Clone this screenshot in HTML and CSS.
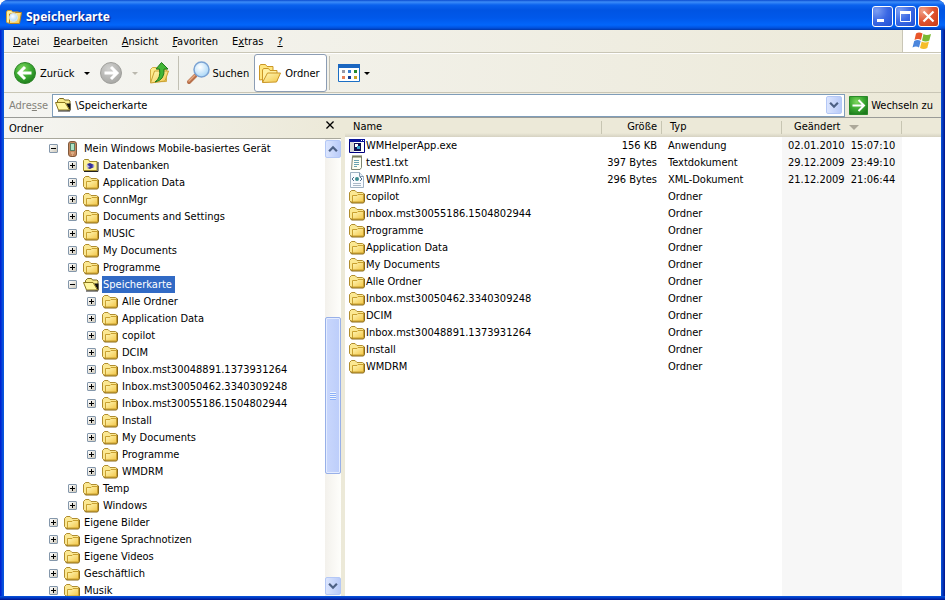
FILE: index.html
```
<!DOCTYPE html>
<html lang="de">
<head>
  <meta charset="UTF-8">
  <meta name="viewport" content="width=device-width, initial-scale=1.0">
  <title>Speicherkarte</title>
  <link rel="stylesheet" href="styles.css">
</head>
<body>
  <!-- Shared icons -->
  <svg class="sprite" width="0" height="0" aria-hidden="true">
    <defs>
      <linearGradient id="gold" x1="0" y1="0" x2="1" y2="1">
        <stop offset="0" stop-color="#fff8b8"/><stop offset="1" stop-color="#f3c648"/>
      </linearGradient>
      <radialGradient id="green" cx=".4" cy=".3" r=".75">
        <stop offset="0" stop-color="#7fd75e"/><stop offset=".55" stop-color="#3aa831"/><stop offset="1" stop-color="#1d7a1b"/>
      </radialGradient>
      <radialGradient id="grey" cx=".4" cy=".3" r=".75">
        <stop offset="0" stop-color="#d2d2d0"/><stop offset="1" stop-color="#a5a5a2"/>
      </radialGradient>
      <radialGradient id="lens" cx=".4" cy=".35" r=".7">
        <stop offset="0" stop-color="#fff"/><stop offset="1" stop-color="#a5d5f7"/>
      </radialGradient>
      <symbol id="folder" viewBox="0 0 16 16">
        <path d="M1.500 12.500l1 1.500h12l1-1.500V5l-1.500-1" fill="#8a6a1c" stroke="#8a6a1c"/>
        <path d="M.5 11.500V3.500L2.500 1.500h3.500L8 3.500h5.500l1 1v8.500H2z" fill="#fbe892" stroke="#b08d2e"/>
        <path d="M3.500 13V6.500h4.500l1-1h5.500V13z" fill="url(#gold)" stroke="#c9a030"/>
      </symbol>
      <symbol id="folder-open" viewBox="0 0 16 16">
        <path d="M2.500 10V3.500L4.500 1.500h4l1 1.500h4.500l1 1v9h-2z" fill="#f6e98a" stroke="#7b6a20"/>
        <path d="M11 6.500h4.500V14z" fill="#111"/>
        <path d="M.5 5.500H10l4.500 7.500h-11z" fill="#fff7a0" stroke="#8c781e"/>
        <path d="M3 14h12" stroke="#222"/>
      </symbol>
      <symbol id="database" viewBox="0 0 16 16">
        <path d="M.5 12.500v-10l1-1h4l1 2h7.500v9z" fill="#fdf29a" stroke="#a08b28"/>
        <path d="M15 4v9.500H1" fill="none" stroke="#222"/>
        <path d="M3 8q4-5 9 0-5 4-9 0" fill="#b9b6e8"/>
        <path d="M4 6l3-1 4 2-2 1 2 1-4 2-3-1 3-1z" fill="#34309a"/>
      </symbol>
      <symbol id="device" viewBox="0 0 16 16">
        <rect x="4.500" y=".5" width="8" height="15" rx="2.500" fill="#c68a60" stroke="#80593c"/>
        <rect x="6.500" y="2.500" width="4" height="7" fill="#aee3c6" stroke="#577f65"/>
        <path d="M7 12h3M8 14h1" stroke="#f1d2ac"/>
      </symbol>
      <symbol id="exe" viewBox="0 0 16 16">
        <path d="M.5 1.500h15v13H.5z" fill="#fff" stroke="#00007f"/>
        <path d="M0 1h16v3H0z" fill="#0a1498"/>
        <path d="M12 2h1v1h-1zM14 2h1v1h-1z" fill="#fff"/>
        <path d="M1 4h4v10H1z" fill="#d7d7d7"/>
        <path d="M5 5h7v8H5z" fill="#101050"/>
        <path d="M6 6h3v3H6z" fill="#fff"/><path d="M8 8h3v3H8z" fill="#3aa7cf"/>
      </symbol>
      <symbol id="txt" viewBox="0 0 16 16">
        <path d="M3.500 1.500h9v11l-1.500 2H2.500z" fill="#fffff2" stroke="#7e8572"/>
        <path d="M4 0v3M6 0v3M8 0v3M10 0v3M12 0v3" stroke="#6f7048"/>
        <path d="M5 5.500h5M5 7.500h5M5 9.500h5M5 11.500h3" stroke="#6aa3b2"/>
      </symbol>
      <symbol id="xml" viewBox="0 0 16 16">
        <path d="M1.500.5h9l4 4v11h-13z" fill="#f8fbff" stroke="#9fb2c4"/>
        <path d="M10.500.5v4h4" fill="#dfe9f3" stroke="#8197ad"/>
        <path d="M5 5L3 7l2 2M11 5l2 2-2 2" fill="none" stroke="#4f6f8f"/>
        <circle cx="8" cy="7" r="2" fill="#3e8d92"/>
        <path d="M4 11.500h8M4 13.500h8" stroke="#a9b8c7"/>
      </symbol>
    </defs>
  </svg>

  <div class="window">
    <header class="titlebar">
      <svg class="icon" viewBox="0 0 16 16">
        <path d="M.5 13V3l1-1.500h4l1 1.500h6v11h-11z" fill="#fff0a0" stroke="#c89b36"/>
        <path d="M3.500 14.500V5h5l1-1.500h6l-2 11z" fill="url(#gold)" stroke="#b88424"/>
        <circle cx="7.500" cy="8.500" r="4" fill="url(#lens)" stroke="#d8e8f4"/>
      </svg>
      <h1 class="title">Speicherkarte</h1>
      <button class="caption" aria-label="Minimieren"><svg viewBox="0 0 19 19"><path d="M4 12h7v3H4z" fill="#fff"/></svg></button>
      <button class="caption" aria-label="Maximieren"><svg viewBox="0 0 19 19"><path d="M4.500 5h10v9.500h-10z" fill="none" stroke="#fff"/><path d="M4 4h11v3H4z" fill="#fff"/></svg></button>
      <button class="caption close" aria-label="Schließen"><svg viewBox="0 0 19 19"><path d="M4.500 4.500l10 10M14.500 4.500l-10 10" stroke="#fff" stroke-width="2.200"/></svg></button>
    </header>

    <div class="client">
      <nav class="menubar">
        <button><u>D</u>atei</button>
        <button><u>B</u>earbeiten</button>
        <button><u>A</u>nsicht</button>
        <button><u>F</u>avoriten</button>
        <button>E<u>x</u>tras</button>
        <button><u>?</u></button>
        <div class="brand">
          <svg viewBox="0 0 20 18">
            <path d="M4 2q3-2 6.500 0L9 8.500q-3-2-6.500 0z" fill="#e8562a"/>
            <path d="M11.500 2.500q3 2 7.500 0l-1.700 6.500q-3.500 2-7.300 0z" fill="#79b933"/>
            <path d="M2.200 9.500q3.500-2 6.500 0L7 16q-3-2-6.500 0z" fill="#4b86dc"/>
            <path d="M9.700 10q3.500 2 7.300 0l-1.700 6.500q-3.500 2-7.300 0z" fill="#f5bd2b"/>
          </svg>
        </div>
      </nav>

      <div class="toolbar">
        <button class="tool">
          <svg class="round" viewBox="0 0 24 24"><circle cx="12" cy="12" r="10.500" fill="url(#green)" stroke="#2d8528"/><path d="M18.500 12H7M12 6l-6 6 6 6" fill="none" stroke="#fff" stroke-width="3"/></svg>
          Zurück
        </button>
        <button class="drop" aria-label="Zurück-Verlauf"></button>
        <button class="tool" aria-label="Vorwärts" disabled>
          <svg class="round" viewBox="0 0 24 24"><circle cx="12" cy="12" r="10.500" fill="url(#grey)" stroke="#a0a09c"/><path d="M5.500 12H17M12 6l6 6-6 6" fill="none" stroke="#fff" stroke-width="3"/></svg>
        </button>
        <button class="drop" aria-label="Vorwärts-Verlauf" disabled></button>
        <button class="tool" aria-label="Aufwärts">
          <svg class="round" viewBox="0 0 24 24"><path d="M3.500 21V8.500l2-2h4l1 2h9v12z" fill="#ffeb8c" stroke="#d3ad45"/><path d="M3.500 22l4-12h14L18 20z" fill="url(#gold)" stroke="#c9a032"/><path d="M8 21q6-4 4.500-13H9l5.500-6.500L21 8h-4q1 11-9 13z" fill="#43b636" stroke="#1f7a1c"/></svg>
        </button>
        <span class="separator"></span>
        <button class="tool">
          <svg class="round" viewBox="0 0 24 24"><path d="M9.500 14.500L3 21" stroke="#b8714b" stroke-width="4" stroke-linecap="round"/><path d="M9 14l-6.500 6.500" stroke="#e8aa82" stroke-width="1.500"/><circle cx="15.500" cy="8.500" r="7.500" fill="url(#lens)" stroke="#7ba3d3" stroke-width="1.500"/></svg>
          Suchen
        </button>
        <button class="tool pressed">
          <svg class="round" viewBox="0 0 24 24"><path d="M1.500 19V5l1-1.500h5l1.500 2h6V17z" fill="#ffe680" stroke="#cb9726"/><path d="M4.500 21V9l1-1.500h5l1.500 2h7V20z" fill="#fff0a0" stroke="#cb9726"/><path d="M4.500 21.500l5-9.500h13l-4 9z" fill="url(#gold)" stroke="#cb9726"/></svg>
          Ordner
        </button>
        <span class="separator"></span>
        <button class="tool views" aria-label="Ansichten">
          <svg class="round" viewBox="0 0 24 24"><path d="M1.500 3.500h21v17h-21z" fill="#fff" stroke="#1c6fc4"/><path d="M1 3h22v4H1z" fill="#1a66c0"/><path d="M5 9h3v3H5z" fill="#9a9aa8"/><path d="M11 9h3v3h-3z" fill="#3a7ed0"/><path d="M17 9h3v3h-3z" fill="#258a2c"/><path d="M5 15h3v3H5z" fill="#e88058"/><path d="M11 15h3v3h-3z" fill="#173b90"/><path d="M17 15h3v3h-3z" fill="#c8a520"/></svg>
        </button>
        <button class="drop small" aria-label="Ansicht wählen"></button>
      </div>

      <form class="addressbar">
        <label for="address">Adre<u>s</u>se</label>
        <div class="field">
          <svg class="icon"><use href="#folder-open"/></svg>
          <input id="address" type="text" value="\Speicherkarte">
          <button class="arrow" type="button" aria-label="Adressliste"><svg viewBox="0 0 9 9"><path d="M1 2.500l3.500 3.500L8 2.500" fill="none" stroke="#4d6185" stroke-width="2"/></svg></button>
        </div>
        <button class="go" type="button">
          <svg viewBox="0 0 19 19"><path d="M.5.5h18v18H.5z" fill="url(#green)" stroke="#2a8a2a"/><path d="M3.500 9.500H15M9.500 4l5.500 5.500L9.500 15" fill="none" stroke="#fff" stroke-width="2"/></svg>
          Wechseln zu
        </button>
      </form>

      <div class="panes">
        <aside class="sidebar">
          <div class="sidebar-head">
            <h2>Ordner</h2>
            <button aria-label="Ordnerleiste schließen"><svg viewBox="0 0 9 9"><path d="M.5.5l8 8M8.500.5l-8 8" stroke="#000" stroke-width="1.500"/></svg></button>
          </div>
          <div class="sidebar-body">
            <ul class="tree">
              <li>
                <div class="node"><button class="toggle open" aria-label="Reduzieren"></button><svg class="icon"><use href="#device"/></svg><span>Mein Windows Mobile-basiertes Gerät</span></div>
                <ul>
                  <li class="node"><button class="toggle" aria-label="Erweitern"></button><svg class="icon"><use href="#database"/></svg><span>Datenbanken</span></li>
                  <li class="node"><button class="toggle" aria-label="Erweitern"></button><svg class="icon"><use href="#folder"/></svg><span>Application Data</span></li>
                  <li class="node"><button class="toggle" aria-label="Erweitern"></button><svg class="icon"><use href="#folder"/></svg><span>ConnMgr</span></li>
                  <li class="node"><button class="toggle" aria-label="Erweitern"></button><svg class="icon"><use href="#folder"/></svg><span>Documents and Settings</span></li>
                  <li class="node"><button class="toggle" aria-label="Erweitern"></button><svg class="icon"><use href="#folder"/></svg><span>MUSIC</span></li>
                  <li class="node"><button class="toggle" aria-label="Erweitern"></button><svg class="icon"><use href="#folder"/></svg><span>My Documents</span></li>
                  <li class="node"><button class="toggle" aria-label="Erweitern"></button><svg class="icon"><use href="#folder"/></svg><span>Programme</span></li>
                  <li>
                    <div class="node"><button class="toggle open" aria-label="Reduzieren"></button><svg class="icon"><use href="#folder-open"/></svg><span class="selected">Speicherkarte</span></div>
                    <ul>
                      <li class="node"><button class="toggle" aria-label="Erweitern"></button><svg class="icon"><use href="#folder"/></svg><span>Alle Ordner</span></li>
                      <li class="node"><button class="toggle" aria-label="Erweitern"></button><svg class="icon"><use href="#folder"/></svg><span>Application Data</span></li>
                      <li class="node"><button class="toggle" aria-label="Erweitern"></button><svg class="icon"><use href="#folder"/></svg><span>copilot</span></li>
                      <li class="node"><button class="toggle" aria-label="Erweitern"></button><svg class="icon"><use href="#folder"/></svg><span>DCIM</span></li>
                      <li class="node"><button class="toggle" aria-label="Erweitern"></button><svg class="icon"><use href="#folder"/></svg><span>Inbox.mst30048891.1373931264</span></li>
                      <li class="node"><button class="toggle" aria-label="Erweitern"></button><svg class="icon"><use href="#folder"/></svg><span>Inbox.mst30050462.3340309248</span></li>
                      <li class="node"><button class="toggle" aria-label="Erweitern"></button><svg class="icon"><use href="#folder"/></svg><span>Inbox.mst30055186.1504802944</span></li>
                      <li class="node"><button class="toggle" aria-label="Erweitern"></button><svg class="icon"><use href="#folder"/></svg><span>Install</span></li>
                      <li class="node"><button class="toggle" aria-label="Erweitern"></button><svg class="icon"><use href="#folder"/></svg><span>My Documents</span></li>
                      <li class="node"><button class="toggle" aria-label="Erweitern"></button><svg class="icon"><use href="#folder"/></svg><span>Programme</span></li>
                      <li class="node"><button class="toggle" aria-label="Erweitern"></button><svg class="icon"><use href="#folder"/></svg><span>WMDRM</span></li>
                    </ul>
                  </li>
                  <li class="node"><button class="toggle" aria-label="Erweitern"></button><svg class="icon"><use href="#folder"/></svg><span>Temp</span></li>
                  <li class="node"><button class="toggle" aria-label="Erweitern"></button><svg class="icon"><use href="#folder"/></svg><span>Windows</span></li>
                </ul>
              </li>
              <li class="node"><button class="toggle" aria-label="Erweitern"></button><svg class="icon"><use href="#folder"/></svg><span>Eigene Bilder</span></li>
              <li class="node"><button class="toggle" aria-label="Erweitern"></button><svg class="icon"><use href="#folder"/></svg><span>Eigene Sprachnotizen</span></li>
              <li class="node"><button class="toggle" aria-label="Erweitern"></button><svg class="icon"><use href="#folder"/></svg><span>Eigene Videos</span></li>
              <li class="node"><button class="toggle" aria-label="Erweitern"></button><svg class="icon"><use href="#folder"/></svg><span>Geschäftlich</span></li>
              <li class="node"><button class="toggle" aria-label="Erweitern"></button><svg class="icon"><use href="#folder"/></svg><span>Musik</span></li>
            </ul>
            <div class="scrollbar">
              <button class="arrow" aria-label="Nach oben"><svg viewBox="0 0 9 9"><path d="M1 6.500L4.500 3 8 6.500" fill="none" stroke="#4d6185" stroke-width="2"/></svg></button>
              <div class="track"><div class="thumb"><i class="grip"></i></div></div>
              <button class="arrow" aria-label="Nach unten"><svg viewBox="0 0 9 9"><path d="M1 2.500l3.500 3.500L8 2.500" fill="none" stroke="#4d6185" stroke-width="2"/></svg></button>
            </div>
          </div>
        </aside>

        <main class="list">
          <table>
            <colgroup>
              <col class="col-name"><col class="col-size"><col class="col-type"><col class="col-date"><col>
            </colgroup>
            <thead>
              <tr><th>Name</th><th class="size">Größe</th><th>Typ</th><th class="sorted">Geändert</th><th></th></tr>
            </thead>
            <tbody>
              <tr><td><div class="file"><svg class="icon"><use href="#exe"/></svg>WMHelperApp.exe</div></td><td class="size">156 KB</td><td>Anwendung</td><td class="date"><span>02.01.2010</span> <span>15:07:10</span></td><td></td></tr>
              <tr><td><div class="file"><svg class="icon"><use href="#txt"/></svg>test1.txt</div></td><td class="size">397 Bytes</td><td>Textdokument</td><td class="date"><span>29.12.2009</span> <span>23:49:10</span></td><td></td></tr>
              <tr><td><div class="file"><svg class="icon"><use href="#xml"/></svg>WMPInfo.xml</div></td><td class="size">296 Bytes</td><td>XML-Dokument</td><td class="date"><span>21.12.2009</span> <span>21:06:44</span></td><td></td></tr>
              <tr><td><div class="file"><svg class="icon"><use href="#folder"/></svg>copilot</div></td><td></td><td>Ordner</td><td></td><td></td></tr>
              <tr><td><div class="file"><svg class="icon"><use href="#folder"/></svg>Inbox.mst30055186.1504802944</div></td><td></td><td>Ordner</td><td></td><td></td></tr>
              <tr><td><div class="file"><svg class="icon"><use href="#folder"/></svg>Programme</div></td><td></td><td>Ordner</td><td></td><td></td></tr>
              <tr><td><div class="file"><svg class="icon"><use href="#folder"/></svg>Application Data</div></td><td></td><td>Ordner</td><td></td><td></td></tr>
              <tr><td><div class="file"><svg class="icon"><use href="#folder"/></svg>My Documents</div></td><td></td><td>Ordner</td><td></td><td></td></tr>
              <tr><td><div class="file"><svg class="icon"><use href="#folder"/></svg>Alle Ordner</div></td><td></td><td>Ordner</td><td></td><td></td></tr>
              <tr><td><div class="file"><svg class="icon"><use href="#folder"/></svg>Inbox.mst30050462.3340309248</div></td><td></td><td>Ordner</td><td></td><td></td></tr>
              <tr><td><div class="file"><svg class="icon"><use href="#folder"/></svg>DCIM</div></td><td></td><td>Ordner</td><td></td><td></td></tr>
              <tr><td><div class="file"><svg class="icon"><use href="#folder"/></svg>Inbox.mst30048891.1373931264</div></td><td></td><td>Ordner</td><td></td><td></td></tr>
              <tr><td><div class="file"><svg class="icon"><use href="#folder"/></svg>Install</div></td><td></td><td>Ordner</td><td></td><td></td></tr>
              <tr><td><div class="file"><svg class="icon"><use href="#folder"/></svg>WMDRM</div></td><td></td><td>Ordner</td><td></td><td></td></tr>
              <tr class="filler"><td></td><td></td><td></td><td></td><td></td></tr>
            </tbody>
          </table>
        </main>
      </div>
    </div>
  </div>
</body>
</html>
```

FILE: styles.css
```
* {
  margin: 0;
  padding: 0;
  box-sizing: border-box;
}

:root {
  --face: #ece9d8;
  --line: #c9c6b6;
  --select: #316ac5;
}

body {
  height: 100vh;
  overflow: hidden;
  background: #fff;
  color: #000;
  font-family: Tahoma, "DejaVu Sans Condensed", "DejaVu Sans", sans-serif;
  font-size: 11px;
  line-height: 17px;
}

button, input {
  font: inherit;
  color: inherit;
  border: none;
  background: none;
}

svg {
  display: block;
  flex: none;
}

ul {
  list-style: none;
}

.sprite {
  position: absolute;
}

.icon {
  width: 16px;
  height: 16px;
}

.window {
  height: 100%;
  display: flex;
  flex-direction: column;
  background:
    linear-gradient(#0855dd, #0036c0 2px, #00138c) bottom / 100% 4px no-repeat,
    linear-gradient(to right, #0019cf, #0855dd 3px, #0855dd calc(100% - 4px), #00138c);
  border-radius: 8px 8px 0 0;
  overflow: hidden;
}

/* Title bar */
.titlebar {
  height: 30px;
  display: flex;
  align-items: center;
  gap: 2px;
  padding: 3px 6px 0;
  background: linear-gradient(#0a4bd0, #3c8cf8 2px, #0a62ee 5px, #0054e3 10px, #0058ea 18px, #0266fb 25px, #0150dc 28px, #0036a8);
}

.title {
  flex: 1;
  padding-left: 2px;
  font-family: "Trebuchet MS", "Noto Sans", sans-serif;
  font-size: 12px;
  font-weight: 700;
  color: #fff;
  text-shadow: 1px 1px 1px #0a1883;
}

.caption {
  width: 21px;
  height: 21px;
  border: 1px solid #fff;
  border-radius: 3px;
  background: radial-gradient(circle at 20% 20%, #7d9ff2, #3a68e4 50%, #2050d4);
}

.caption.close {
  background: radial-gradient(circle at 20% 20%, #f0a088, #e0532f 50%, #c93a14);
}

.client {
  flex: 1;
  min-height: 0;
  display: flex;
  flex-direction: column;
  margin: 0 4px 4px;
  background: linear-gradient(to right, #f5f5f2, var(--face));
}

/* Menu */
.menubar {
  height: 23px;
  display: flex;
  align-items: center;
  padding-left: 2px;
  border-bottom: 1px solid var(--line);
}

.menubar button {
  padding: 0 7px;
}

.brand {
  width: 39px;
  height: 22px;
  margin-left: auto;
  padding: 1px 9px;
  background: #fff;
  border-left: 1px solid var(--line);
}

.brand svg {
  width: 20px;
  height: 19px;
}

/* Toolbar */
.toolbar {
  height: 40px;
  display: flex;
  align-items: center;
  padding-left: 4px;
  border-top: 1px solid #fff;
  border-bottom: 1px solid var(--line);
}

.tool {
  height: 38px;
  display: flex;
  align-items: center;
  gap: 3px;
  padding: 0 4px;
  border: 1px solid transparent;
  border-radius: 3px;
}

.tool.pressed {
  padding: 0 6px 0 3px;
  background: #fff;
  border-color: #8c9db4;
}

.tool.views {
  padding: 0 1px 0 4px;
}

.round {
  width: 24px;
  height: 24px;
}

.drop {
  width: 14px;
  height: 24px;
  display: flex;
  align-items: center;
  justify-content: center;
}

.drop.small {
  width: 8px;
}

.drop::before {
  content: "";
  border: 3px solid transparent;
  border-top-color: #000;
  border-bottom: none;
}

.drop:disabled::before {
  border-top-color: #bab8ae;
}

.separator {
  width: 1px;
  height: 34px;
  margin: 0 2px;
  background: #c2c0b4;
}

/* Address bar */
.addressbar {
  display: flex;
  align-items: center;
  height: 24px;
  padding: 0 8px 0 5px;
  gap: 4px;
}

.addressbar label {
  color: #84827a;
}

.field {
  flex: 1;
  height: 23px;
  display: flex;
  align-items: center;
  gap: 4px;
  padding: 0 2px;
  background: #fff;
  border: 1px solid #7f9db9;
}

.field input {
  flex: 1;
  min-width: 0;
  outline: none;
}

.arrow {
  width: 16px;
  height: 18px;
  flex: none;
  display: flex;
  align-items: center;
  justify-content: center;
  border: 1px solid #b4c8f6;
  border-radius: 2px;
  background: linear-gradient(to right, #dbe5fe, #b9cbf8);
}

.arrow svg {
  width: 10px;
  height: 10px;
}

.go {
  display: flex;
  align-items: center;
  gap: 3px;
}

.go svg {
  width: 19px;
  height: 19px;
}

/* Panes */
.panes {
  flex: 1;
  min-height: 0;
  display: flex;
  gap: 4px;
  background: var(--face);
  border-top: 1px solid #9a9b97;
}

.sidebar {
  width: 337px;
  flex: none;
  display: flex;
  flex-direction: column;
}

.sidebar-head {
  height: 21px;
  display: flex;
  align-items: center;
  justify-content: space-between;
  padding: 0 7px 0 5px;
  background: linear-gradient(to right, #f5f5f2, var(--face));
  border-bottom: 1px solid #a9a89c;
}

.sidebar-head h2 {
  font-size: 11px;
  font-weight: 400;
}

.sidebar-head button {
  padding-bottom: 6px;
}

.sidebar-head svg {
  width: 8px;
  height: 8px;
}

.sidebar-body {
  flex: 1;
  min-height: 0;
  display: flex;
  background: #fff;
}

.tree {
  flex: 1;
  min-width: 0;
  padding: 1px 0 0 45px;
  overflow: hidden;
}

.tree ul {
  padding-left: 19px;
}

.node {
  height: 17px;
  display: flex;
  align-items: center;
  white-space: nowrap;
}

.node .icon {
  margin: 0 3px 0 6px;
}

.node span {
  padding: 0 3px 0 1px;
}

.node .selected {
  background: var(--select);
  color: #fff;
}

.toggle {
  width: 9px;
  height: 9px;
  border: 1px solid #8497ab;
  border-radius: 1px;
  background:
    linear-gradient(#000, #000) center / 5px 1px no-repeat,
    linear-gradient(#000, #000) center / 1px 5px no-repeat,
    linear-gradient(135deg, #fff, #cfcabc);
}

.toggle.open {
  background:
    linear-gradient(#000, #000) center / 5px 1px no-repeat,
    linear-gradient(135deg, #fff, #cfcabc);
}

.scrollbar {
  width: 16px;
  display: flex;
  flex-direction: column;
  padding: 1px 0;
  background: linear-gradient(to right, #f3f1ec, #fefefb);
}

.track {
  flex: 1;
  display: grid;
  grid-template-rows: 160fr 158fr 103fr;
}

.thumb {
  grid-row: 2;
  display: flex;
  align-items: center;
  justify-content: center;
  border: 1px solid #98b0e8;
  border-radius: 2px;
  box-shadow: inset 0 0 0 1px #e4ecff;
  background: linear-gradient(to right, #c9d7fc, #bccdfa);
}

.grip {
  width: 6px;
  height: 8px;
  background: repeating-linear-gradient(#eef4fe 0 1px, #8cb0f8 1px 2px);
}

/* File list */
.list {
  flex: 1;
  min-width: 0;
  overflow: hidden;
  background: #fff;
}

table {
  width: 100%;
  height: 100%;
  table-layout: fixed;
  border-collapse: separate;
  border-spacing: 0;
}

.col-name { width: 257px; }
.col-size { width: 60px; }
.col-type { width: 120px; }
.col-date { width: 120px; background: #f7f7f7; }

th {
  height: 19px;
  padding: 0 8px 2px;
  font-weight: 400;
  text-align: left;
  background:
    linear-gradient(#c7c5b2, #c7c5b2) right center / 1px 13px no-repeat,
    linear-gradient(var(--face) 15px, #d6d2c2);
}

th:last-child {
  background: linear-gradient(var(--face) 15px, #d6d2c2);
}

td {
  height: 17px;
  padding: 0 6px;
  white-space: nowrap;
}

td:first-child {
  padding: 0 4px;
}

.size {
  padding-right: 5px;
  padding-left: 0;
  text-align: right;
}

.filler td {
  height: auto;
}

.file {
  display: flex;
  align-items: center;
  gap: 1px;
}

.date span + span {
  margin-left: 3px;
}

.sorted {
  padding-left: 12px;
}

.sorted::after {
  content: "";
  display: inline-block;
  margin-left: 9px;
  vertical-align: middle;
  border: 5px solid transparent;
  border-top-color: #aca899;
  border-bottom: none;
}
```
